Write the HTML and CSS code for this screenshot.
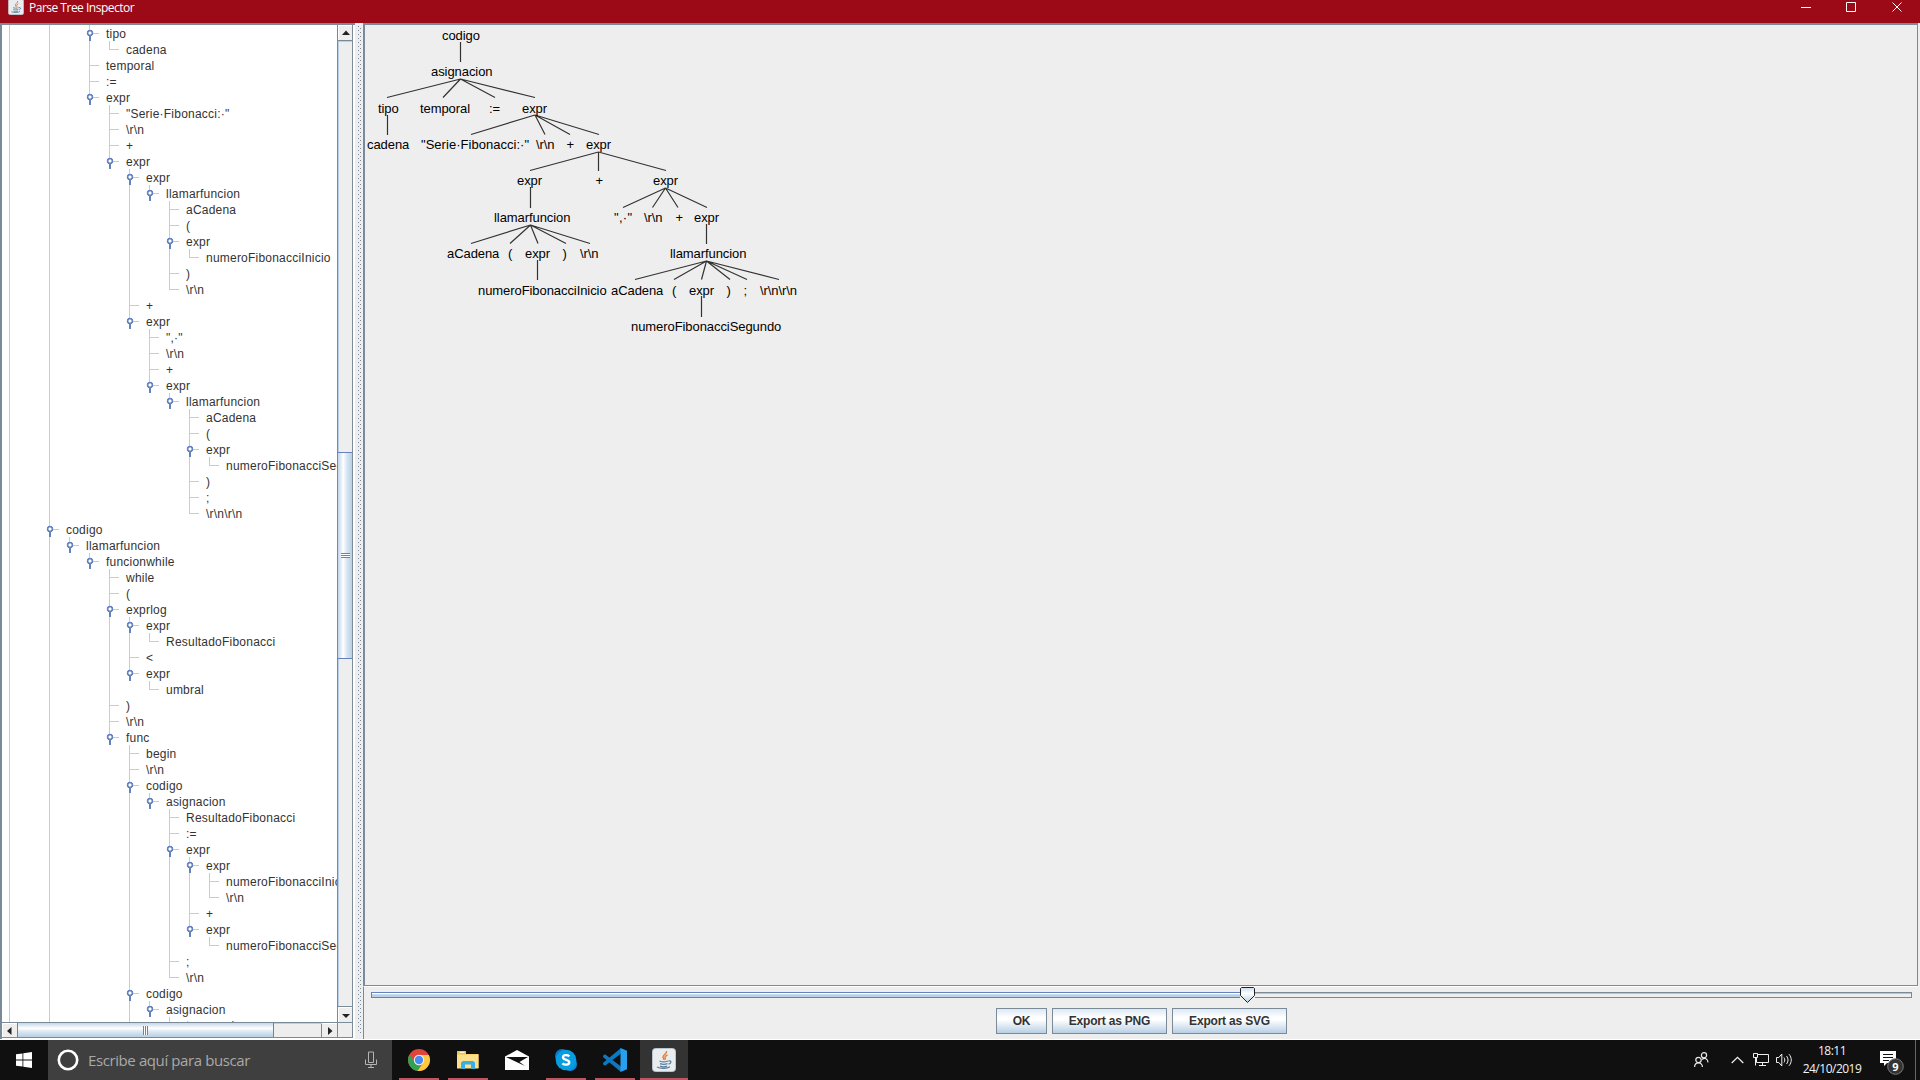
FILE: index.html
```html
<!DOCTYPE html>
<html lang="es">
<head>
<meta charset="utf-8">
<title>Parse Tree Inspector</title>
<link rel="stylesheet" href="styles.css">
</head>
<body>
<header class="titlebar">
  <svg class="app-icon" width="16" height="16" viewBox="0 0 24 24"><use href="#java"/></svg>
  <h1>Parse Tree Inspector</h1>
  <svg class="controls" width="110" height="14" viewBox="0 0 110 14" fill="none" stroke="#fff">
    <path d="M1 7.500h10M46.500 2.500h9v9h-9zM92.500 2.500l9 9m0-9l-9 9"/>
  </svg>
</header>

<main class="window">
  <section class="tree-pane">
    <div class="tree-view">
      <ul class="tree">
        <li class="more"><ul class="bare"><li class="bare"><ul>
          <li><ul class="bare"><li class="bare"><ul>
            <li><span class="open">tipo</span><ul><li><span>cadena</span></li></ul></li>
            <li><span>temporal</span></li>
            <li><span>:=</span></li>
            <li><span class="open">expr</span><ul>
              <li><span>"Serie·Fibonacci:·"</span></li>
              <li><span>\r\n</span></li>
              <li><span>+</span></li>
              <li><span class="open">expr</span><ul>
                <li><span class="open">expr</span><ul>
                  <li><span class="open">llamarfuncion</span><ul>
                    <li><span>aCadena</span></li>
                    <li><span>(</span></li>
                    <li><span class="open">expr</span><ul><li><span>numeroFibonacciInicio</span></li></ul></li>
                    <li><span>)</span></li>
                    <li><span>\r\n</span></li>
                  </ul></li>
                </ul></li>
                <li><span>+</span></li>
                <li><span class="open">expr</span><ul>
                  <li><span>",·"</span></li>
                  <li><span>\r\n</span></li>
                  <li><span>+</span></li>
                  <li><span class="open">expr</span><ul>
                    <li><span class="open">llamarfuncion</span><ul>
                      <li><span>aCadena</span></li>
                      <li><span>(</span></li>
                      <li><span class="open">expr</span><ul><li><span>numeroFibonacciSegundo</span></li></ul></li>
                      <li><span>)</span></li>
                      <li><span>;</span></li>
                      <li><span>\r\n\r\n</span></li>
                    </ul></li>
                  </ul></li>
                </ul></li>
              </ul></li>
            </ul></li>
          </ul></li></ul></li>
          <li class="more"><span class="open">codigo</span><ul>
            <li><span class="open">llamarfuncion</span><ul>
              <li><span class="open">funcionwhile</span><ul>
                <li><span>while</span></li>
                <li><span>(</span></li>
                <li><span class="open">exprlog</span><ul>
                  <li><span class="open">expr</span><ul><li><span>ResultadoFibonacci</span></li></ul></li>
                  <li><span>&lt;</span></li>
                  <li><span class="open">expr</span><ul><li><span>umbral</span></li></ul></li>
                </ul></li>
                <li><span>)</span></li>
                <li><span>\r\n</span></li>
                <li><span class="open">func</span><ul>
                  <li><span>begin</span></li>
                  <li><span>\r\n</span></li>
                  <li><span class="open">codigo</span><ul>
                    <li><span class="open">asignacion</span><ul>
                      <li><span>ResultadoFibonacci</span></li>
                      <li><span>:=</span></li>
                      <li><span class="open">expr</span><ul>
                        <li><span class="open">expr</span><ul>
                          <li><span>numeroFibonacciInicio</span></li>
                          <li><span>\r\n</span></li>
                        </ul></li>
                        <li><span>+</span></li>
                        <li><span class="open">expr</span><ul><li><span>numeroFibonacciSegundo</span></li></ul></li>
                      </ul></li>
                      <li><span>;</span></li>
                      <li><span>\r\n</span></li>
                    </ul></li>
                  </ul></li>
                  <li class="more"><span class="open">codigo</span><ul>
                    <li><span class="open">asignacion</span><ul>
                      <li class="more"><span>temporal</span></li>
                    </ul></li>
                  </ul></li>
                </ul></li>
              </ul></li>
            </ul></li>
          </ul></li>
        </ul></li></ul></li>
      </ul>
    </div>
    <div class="vscroll">
      <div class="arrow"><svg width="14" height="14"><path d="M3 9h8L7 4.500z"/></svg></div>
      <div class="track"><div class="thumb"><i></i></div></div>
      <div class="arrow down"><svg width="14" height="14"><path d="M3 6h8L7 10z"/></svg></div>
    </div>
    <div class="hscroll">
      <div class="arrow"><svg width="14" height="14"><path d="M8.500 3v8L4 7z"/></svg></div>
      <div class="track"><div class="thumb"><i></i></div></div>
      <div class="arrow right"><svg width="15" height="14"><path d="M6 3v8l4.500-4z"/></svg></div>
    </div>
    <div class="corner"></div>
  </section>

  <div class="divider"></div>

  <section class="graph-pane">
    <svg class="graph" width="1552" height="960" viewBox="365 25 1552 960">
      <g class="edges">
        <path d="M460.500 42v20M460.500 79L387 97.500M460.500 79L443 97.500M460.500 79l34.500 18.500M460.500 79L535 97.500M387.500 115v20"/>
        <path d="M535 115l-64 19.500M535 115l10 19.500M535 115l35 19.500M535 115l64 19.500"/>
        <path d="M598.500 152L530 170.500M598.500 152v19M598.500 152l67.500 18.500M530.500 187v21"/>
        <path d="M665.500 188l-42.500 19.500M665.500 188l-13 19.500M665.500 188l12.500 19.500M665.500 188l41.500 19.500"/>
        <path d="M530.500 225l-59.500 18.500M530.500 225l-20.500 18.500M530.500 225l7.500 18.500M530.500 225l35.500 18.500M530.500 225l59.500 18.500"/>
        <path d="M706.500 224v20M537.500 260v20M706.500 261l-71.500 18.500M706.500 261l-32.500 18.500M706.500 261l-5 18.500M706.500 261l23.500 18.500M706.500 261l40.500 18.500M706.500 261l72.500 18.500M701.500 296v21"/>
      </g>
      <g class="nodes">
        <text x="442" y="40">codigo</text>
        <text x="431" y="76">asignacion</text>
        <text x="378" y="113">tipo</text><text x="420" y="113">temporal</text><text x="489" y="113">:=</text><text x="522" y="113">expr</text>
        <text x="367" y="149">cadena</text><text x="421" y="149" textLength="108">"Serie·Fibonacci:·"</text><text x="536" y="149">\r\n</text><text x="566.500" y="149">+</text><text x="586" y="149">expr</text>
        <text x="517" y="185">expr</text><text x="595.500" y="185">+</text><text x="653" y="185">expr</text>
        <text x="494" y="222">llamarfuncion</text><text x="614" y="222" textLength="18">",·"</text><text x="644" y="222">\r\n</text><text x="675.500" y="222">+</text><text x="694" y="222">expr</text>
        <text x="447" y="258">aCadena</text><text x="508" y="258">(</text><text x="525" y="258">expr</text><text x="562.500" y="258">)</text><text x="580" y="258">\r\n</text><text x="670" y="258">llamarfuncion</text>
        <text x="478" y="295">numeroFibonacciInicio</text><text x="611" y="295">aCadena</text><text x="672" y="295">(</text><text x="689" y="295">expr</text><text x="726.500" y="295">)</text><text x="743.500" y="295">;</text><text x="760" y="295">\r\n\r\n</text>
        <text x="631" y="331">numeroFibonacciSegundo</text>
      </g>
    </svg>
    <div class="controls-bar">
      <div class="slider">
        <div class="filled"></div>
        <svg class="knob" width="15" height="16" viewBox="0 0 15 16"><defs><linearGradient id="k" x2="0" y2="1"><stop stop-color="#c8dbee"/><stop offset=".4" stop-color="#fff"/><stop offset="1" stop-color="#b8cfe5"/></linearGradient></defs><path d="M1.500.500h12l1 1v7l-7 7-7-7v-7z" fill="url(#k)" stroke="#222"/></svg>
        <div class="rest"></div>
      </div>
      <div class="buttons">
        <button class="ok">OK</button>
        <button>Export as PNG</button>
        <button>Export as SVG</button>
      </div>
    </div>
  </section>
</main>

<footer class="taskbar">
  <div class="start"><svg width="16" height="16" fill="#fff"><path d="M0 2.300l6.500-.9v6.100H0zM7.300 1.300L16 0v7.500H7.300zM0 8.400h6.500v6.200L0 13.700zM7.300 8.400H16V16l-8.700-1.200z"/></svg></div>
  <div class="search">
    <svg width="22" height="22" fill="none" stroke="#fff" stroke-width="2.600"><circle cx="11" cy="11" r="9.200"/></svg>
    <span>Escribe aquí para buscar</span>
    <svg class="mic" width="12" height="18" fill="none" stroke="#b4b4b4"><path d="M3.500 1h5v10.500h-5zM.5 8.500v5h11v-5M6 14v3M3 16.500h6"/></svg>
  </div>
  <nav class="apps">
    <div class="app run"><svg width="22" height="22" viewBox="0 0 22 22"><circle cx="11" cy="11" r="11" fill="#e0453a"/><path d="M1.500 5.500A11 11 0 0 0 9.500 21.900L15.300 13.500 11 11 6.700 13.500z" fill="#2fa254"/><path d="M9.500 21.900A11 11 0 0 0 20.700 6H11l4.300 7.500z" fill="#fcca3f"/><circle cx="11" cy="11" r="5.200" fill="#f4f4f4"/><circle cx="11" cy="11" r="4.200" fill="#4a8af4"/></svg></div>
    <div class="app run"><svg width="22" height="20" viewBox="0 0 22 20"><path d="M0 1h9v3h12.500v14H0z" fill="#f0c14b"/><path d="M0 4.500h21.500v14H0z" fill="#fbe08c"/><path d="M2.500 1.800h5v1h-5z" fill="#fff"/><path d="M4 19v-6.500L6 11h10l2 1.500V19h-4v-4.500H8V19z" fill="#38b0e6"/></svg></div>
    <div class="app"><svg width="24" height="20" viewBox="0 0 24 20"><path d="M0 6.500L12 0l12 6.500V20H0z" fill="#fff"/><path d="M1 7h22l-8.500 5L20 16 1 7z" fill="#101010"/></svg></div>
    <div class="app run"><svg width="24" height="24" viewBox="0 0 24 24"><circle cx="8" cy="8" r="7" fill="#0d75c8"/><circle cx="16" cy="16" r="7" fill="#0d88d8"/><circle cx="12" cy="12" r="10.300" fill="#079de3"/><path d="M15.300 8.300C13.500 6.700 9 6.600 9 9.300c0 3.200 6.300 2 6.300 5 0 3-4.900 2.900-6.900 1.100" fill="none" stroke="#fff" stroke-width="2.300"/></svg></div>
    <div class="app run"><svg width="24" height="24" viewBox="0 0 24 24"><path d="M0 7.800l2-1.600 16 12.300V24L.2 9.300z" fill="#1176bc"/><path d="M0 16.200l2 1.600L18 5.500V0L.2 14.700z" fill="#087bc4"/><path d="M17.500 0L24 2.800v18.400L17.500 24z" fill="#27a0ee"/></svg></div>
    <div class="app run active"><svg width="24" height="24" viewBox="0 0 24 24"><g id="java"><rect x=".5" y=".5" width="23" height="23" rx="3" fill="#e9edf0" stroke="#bbc4ca"/><path d="M14.500 3c1 3-4.500 4-3.500 6.500.4 1 1.300 1.500 1 2.700M15.500 7c-3 1.300-3 2.500-1.800 4.500" fill="none" stroke="#e27a31" stroke-width="1.400"/><path d="M7.500 13c2 1 6 1 8.500 0M8 15.700c2.500.8 5 .8 7.500 0M16.500 13c3.500-.8 3 2.500 0 3.200M5 19c4 2 10 1.500 13-.3M8 18.200c2 .7 5 .7 7 0" fill="none" stroke="#587f9c" stroke-width="1.300"/></g></svg></div>
  </nav>
  <div class="tray">
    <svg class="people" width="15" height="16" fill="none" stroke="#e8e8e8" stroke-width="1.200"><circle cx="4.500" cy="8" r="2.700"/><path d="M.6 15c0-5.500 7.800-5.500 7.800 0"/><circle cx="10" cy="3.300" r="2.600"/><path d="M8 7.500c2.700-2.300 6-.8 6 3"/></svg>
    <svg class="up" width="13" height="8" fill="none" stroke="#eee" stroke-width="1.300"><path d="M.7 7l5.800-5.700L12.300 7"/></svg>
    <svg class="net" width="17" height="14" fill="none" stroke="#eee"><path d="M4.500 1.500h11v8h-12V5M9.500 10v3M6 12.500h7M.5.500h4v4h-4zM2.500 4.500v8"/></svg>
    <svg class="vol" width="18" height="14" fill="none" stroke="#eee"><path d="M.5 4.500h2.300l3-3.500v12l-3-3.500H.5zM8 4.500c1 1.500 1 3.500 0 5M10.500 3c2 2.500 2 5.500 0 8M13 1.200c3 3.500 3 8 0 11.600"/></svg>
    <div class="clock"><span>18:11</span><span>24/10/2019</span></div>
    <svg class="notes" width="26" height="26" viewBox="0 0 26 26"><path d="M0 1h16v12H7l-3 3v-3H0z" fill="#fff"/><path d="M3 4.500h10M3 7.500h10M3 10.500h6" stroke="#111"/><circle cx="15.500" cy="16.500" r="7.800" fill="#333" stroke="#7a7a7a"/><text x="15.500" y="20.500" text-anchor="middle">9</text></svg>
    <div class="peek"></div>
  </div>
</footer>
</body>
</html>
```
FILE: styles.css
```css
* { box-sizing: border-box; }
body {
  margin: 0;
  width: 1920px;
  height: 1080px;
  overflow: hidden;
  display: flex;
  flex-direction: column;
  background: #eee;
  font: 12px/16px "Liberation Sans", Arial, sans-serif;
  color: #333;
}
svg { display: block; flex: none; }

.titlebar {
  height: 23px;
  display: flex;
  align-items: flex-start;
  background: #9c0a17;
  padding-left: 8px;
}
.app-icon { margin-top: -1px; }
.titlebar h1 {
  margin: 0 0 0 5px;
  font: 12px/16px "Open Sans", sans-serif;
  letter-spacing: -.5px;
  color: #fff;
}
.controls { margin-left: auto; margin-right: 10px; }

.window {
  height: 1017px;
  display: flex;
  border-bottom: 1px solid #fff;
}
.tree-pane {
  width: 355px;
  display: grid;
  grid-template: 997px 16px / 335px 16px;
  border: solid #7a8a99;
  border-width: 2px 0 0 2px;
  background: #fff;
}
.tree-view { overflow: hidden; background: #fff; }
.tree, .tree ul { list-style: none; margin: 0; padding: 0; }
.tree { padding: 0 0 0 7px; width: 500px; --line: #b8cfe5; }
.tree > li { padding-top: 1px; }
.tree ul {
  margin-top: -1px;
  padding-top: 1px;
  margin-left: 20px;
  background: linear-gradient(var(--line), var(--line)) 0 0 / 1px 1px no-repeat;
}
.tree li { background: linear-gradient(var(--line), var(--line)) 0 0 / 1px 8px no-repeat; }
.tree li:not(:last-child), .tree li.more { background-size: 1px 100%; }
.tree .bare { background: none; }
.tree span {
  display: block;
  height: 16px;
  line-height: 16px;
  padding-left: 17px;
  white-space: nowrap;
  letter-spacing: .22px;
  background: linear-gradient(var(--line), var(--line)) 0 7px / 10px 1px no-repeat;
}
.tree .open {
  margin-left: -3px;
  padding-left: 20px;
  background:
    radial-gradient(circle at 4px 4px, #fff 1.3px, #6382bf 1.8px 3.100px, transparent 3.600px) 0 3px / 8px 8px no-repeat,
    linear-gradient(#6382bf, #6382bf) 3px 10px / 2px 5px no-repeat,
    linear-gradient(var(--line), var(--line)) 6px 7px / 7px 1px no-repeat;
}

.vscroll { display: flex; flex-direction: column; border: solid #7a8a99; border-width: 0 1px; background: #eee; }
.arrow { flex: none; background: #eee; fill: #222; border: 1px solid #fff; border-width: 1px 0 0 1px; }
.vscroll .arrow { height: 15px; box-shadow: 0 1px #7a8a99; position: relative; }
.vscroll .down { box-shadow: 0 -1px #7a8a99; }
.track { flex: 1; background: #eee; }
.vscroll .track { padding-top: 412px; border-left: 1px solid #b8cfe5; box-shadow: inset 0 2px #b8cfe5; }
.vscroll .thumb {
  height: 207px;
  margin-left: -1px;
  border: 1px solid #6382bf;
  border-left: 0;
  border-right: 0;
  background: linear-gradient(90deg, #c3d6ea, #fff 38%, #dce8f3 60%, #b8cfe5);
  display: grid;
  place-items: center;
}
.thumb i { display: block; }
.vscroll i { width: 9px; height: 5px; background: repeating-linear-gradient(#6382bf 0 1px, #fff 1px 2px); }
.hscroll { display: flex; border: solid #7a8a99; border-width: 1px 0; background: #eee; }
.hscroll .arrow { width: 15px; }
.hscroll .right { width: 16px; border-left: 1px solid #7a8a99; }
.hscroll .track { border-top: 1px solid #b8cfe5; }
.hscroll .thumb {
  width: 257px;
  height: 14px;
  margin-top: -1px;
  border: solid #6382bf;
  border-width: 0 1px;
  background: linear-gradient(#c3d6ea, #fff 38%, #dce8f3 60%, #b8cfe5);
  display: grid;
  place-items: center;
}
.hscroll i { width: 5px; height: 9px; background: repeating-linear-gradient(90deg, #6382bf 0 1px, #fff 1px 2px); }
.corner { background: #eee; border: 1px solid #7a8a99; }

.divider {
  width: 8px;
  background:
    repeating-linear-gradient(#7a8a99 0 1px, #eee 1px 4px) 3px 3px / 1px 1008px no-repeat,
    repeating-linear-gradient(#7a8a99 0 1px, #eee 1px 4px) 5px 5px / 1px 1008px no-repeat,
    #eee;
}

.graph-pane { flex: 1; display: flex; flex-direction: column; padding-right: 2px; }
.graph {
  box-sizing: content-box;
  background: #eee;
  border: solid #7a8a99;
  border-width: 2px 1px 1px 2px;
}
.edges { fill: none; stroke: #333; stroke-width: 1.200; }
.nodes { font-size: 13px; letter-spacing: -.07px; fill: #000; }
.controls-bar { flex: 1; border-top: 1px solid #fff; border-left: 1px solid #7a8a99; }
.slider { display: flex; margin: 0 6px 0 7px; height: 16px; align-items: flex-start; }
.filled {
  width: 869px;
  height: 6px;
  margin-top: 5px;
  border: 1px solid #6382bf;
  border-right: 0;
  background: linear-gradient(#fff 0 1px, #c9dae9 1px 2px, #b8cfe5 2px);
}
.rest {
  flex: 1;
  height: 6px;
  margin-top: 5px;
  border: 1px solid #7a8a99;
  border-left: 0;
  background: linear-gradient(#b8c4d0 0 1px, #eee 1px);
}
.buttons { display: flex; gap: 5px; padding-left: 632px; margin-top: 5px; }
.buttons button {
  width: 115px;
  height: 26px;
  padding: 0;
  border: 1px solid #7a8a99;
  background: linear-gradient(#dce8f3, #fff 35%, #fff 45%, #b8cfe5);
  font: bold 12px/16px "Liberation Sans", Arial, sans-serif;
  letter-spacing: -.2px;
  color: #333;
}
.buttons .ok { width: 51px; }

.taskbar { height: 40px; display: flex; background: #101010; font-family: "Open Sans", sans-serif; }
.start { width: 48px; display: grid; place-items: center; }
.search {
  width: 344px;
  display: flex;
  align-items: center;
  padding: 0 15px 0 9px;
  background: #3f3f3f;
  color: #a9a9a9;
  font-size: 15px;
}
.search span { margin-left: 9px; letter-spacing: -.4px; white-space: nowrap; }
.mic { margin-left: auto; }
.apps { display: flex; gap: 1px; padding-left: 3px; }
.app { width: 48px; display: grid; place-items: center; }
.app.run { background: linear-gradient(#bd5662, #bd5662) center bottom / 40px 2px no-repeat; }
.app.run.active { background: linear-gradient(#bd5662, #bd5662) center bottom / 48px 2px no-repeat #333; }
.tray { margin-left: auto; display: flex; align-items: center; }
.up { margin-left: 22px; }
.net { margin-left: 9px; }
.vol { margin-left: 6px; }
.clock {
  width: 60px;
  margin-left: 8px;
  display: flex;
  flex-direction: column;
  align-items: center;
  font-size: 12px;
  line-height: 18px;
  letter-spacing: -.5px;
  color: #f2f2f2;
}
.notes { margin-left: 18px; margin-top: 6px; font: bold 11px "Open Sans", sans-serif; fill: #fff; }
.peek { width: 5px; height: 40px; margin-left: 9px; border-left: 1px solid #666; }
```
